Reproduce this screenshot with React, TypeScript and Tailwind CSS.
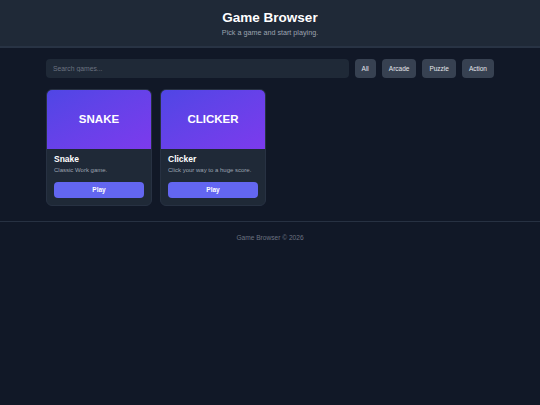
const games = [
  { id: "snake", title: "Snake", banner: "SNAKE", desc: "Classic Work game." },
  { id: "clicker", title: "Clicker", banner: "CLICKER", desc: "Click your way to a huge score." },
];

const filters = ["All", "Arcade", "Puzzle", "Action"];

export default function App() {
  return (
    <div className="min-h-[405px] bg-[#111827] font-['Liberation_Sans',Arial,sans-serif] text-white">
      {/* Header */}
      <header className="bg-[#1f2937] border-b-2 border-[#283344] pt-[9px] pb-[8px] text-center">
        <h1 className="text-[13.5px] leading-[18px] font-bold">Game Browser</h1>
        <p className="text-[7.2px] leading-[10px] mt-[1px] text-[#9ca3af]">
          Pick a game and start playing.
        </p>
      </header>

      <main className="max-w-[448px] mx-auto pt-[11px]">
        {/* Search + filters */}
        <div className="flex items-center gap-[6px]">
          <input
            type="text"
            placeholder="Search games..."
            className="flex-1 h-[19px] rounded-[4px] bg-[#1f2937] px-[7px] text-[6.8px] text-white placeholder:text-[#6b7280] outline-none"
          />
          {filters.map((f) => (
            <button
              key={f}
              className="h-[19px] px-[7px] rounded-[4px] bg-[#374151] text-[6.5px] font-medium text-[#e5e7eb]"
            >
              {f}
            </button>
          ))}
        </div>

        {/* Cards */}
        <div className="grid grid-cols-4 gap-[8px] mt-[11px]">
          {games.map((g) => (
            <div
              key={g.id}
              className="bg-[#1f2937] rounded-[6px] border border-[#273142] overflow-hidden"
            >
              <div className="h-[59px] bg-gradient-to-br from-[#4f46e5] to-[#7c3aed] flex items-center justify-center">
                <span className="text-[11.5px] font-bold">{g.banner}</span>
              </div>
              <div className="px-[7px] pt-[4px] pb-[6px]">
                <h3 className="text-[8.5px] leading-[12px] font-bold">{g.title}</h3>
                <p className="text-[6px] leading-[9px] mt-[1px] text-[#9ca3af]">{g.desc}</p>
                <button className="w-full h-[16px] mt-[3px] rounded-[4px] bg-[#6366f1] text-[6.5px] font-bold">
                  Play
                </button>
              </div>
            </div>
          ))}
        </div>
      </main>

      {/* Footer */}
      <footer className="mt-[15px] border-t border-[#273142] pt-[11px] text-center">
        <p className="text-[6.6px] text-[#6b7280]">Game Browser © 2026</p>
      </footer>
    </div>
  );
}
